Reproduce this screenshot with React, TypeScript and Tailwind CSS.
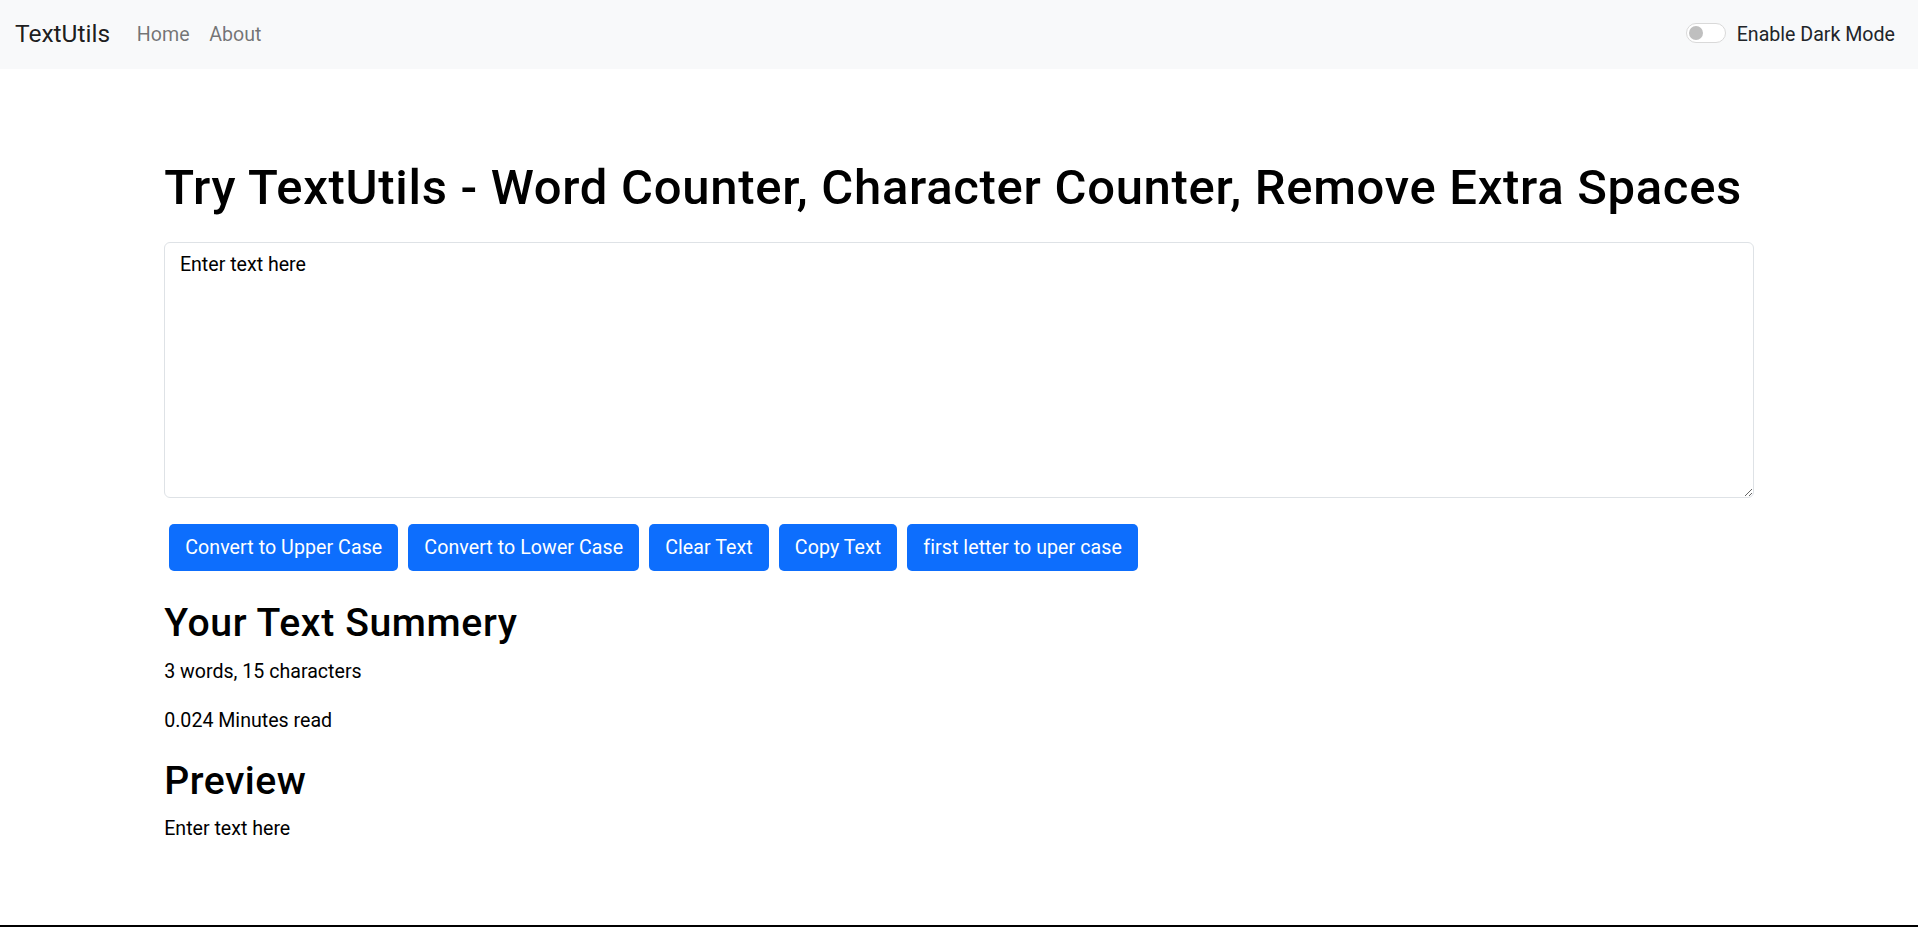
import { useState } from "react";

const buttons = [
  "Convert to Upper Case",
  "Convert to Lower Case",
  "Clear Text",
  "Copy Text",
  "first letter to uper case",
];

export default function App() {
  const [text, setText] = useState("Enter text here");
  const words = text.split(/\s+/).filter((w) => w.length > 0).length;

  return (
    <div className="min-h-[927px] flex flex-col bg-white text-black font-['Roboto','Segoe_UI','Noto_Sans',sans-serif]">
      {/* Navbar */}
      <nav className="h-[69px] bg-[#f8f9fa] flex items-center px-[15px]">
        <a href="#" className="text-[24.5px] leading-[1.5] text-black/90 mr-[17px]">
          TextUtils
        </a>
        <ul className="flex items-center">
          <li>
            <a href="#" className="block px-[9.8px] text-[19.6px] leading-[1.5] text-black/55">
              Home
            </a>
          </li>
          <li>
            <a href="#" className="block px-[9.8px] text-[19.6px] leading-[1.5] text-black/55">
              About
            </a>
          </li>
        </ul>
        <div className="ml-auto flex items-center gap-[11px] pr-[8px]">
          <span className="relative w-[40px] h-[20px] rounded-full border border-[#d9d9d9] bg-white -mt-[3px]">
            <span className="absolute left-[2px] top-[2px] w-[14px] h-[14px] rounded-full bg-[#bfbfbf]" />
          </span>
          <label className="text-[19.6px] leading-[1.5] text-[#212529]">Enable Dark Mode</label>
        </div>
      </nav>

      {/* Main */}
      <main className="w-full max-w-[1619px] mx-auto px-[14.7px] pt-[90px]">
        <h1 className="text-[49px] leading-[1.2] font-medium tracking-[0.7px] mb-[24px]">
          Try TextUtils - Word Counter, Character Counter, Remove Extra Spaces
        </h1>
        <textarea
          value={text}
          onChange={(e) => setText(e.target.value)}
          className="block w-full h-[256px] border border-[#dee2e6] rounded-[6px] px-[14.7px] py-[7.4px] text-[19.6px] leading-[1.5] text-black outline-none"
        />
        <div className="flex gap-[10px] ml-[5px] mt-[26px]">
          {buttons.map((b) => (
            <button
              key={b}
              className="h-[47px] px-[16px] rounded-[5px] bg-[#0d6efd] text-white text-[19.6px] leading-[1.5] tracking-[0.07px]"
            >
              {b}
            </button>
          ))}
        </div>

        <h2 className="text-[39.2px] leading-[1.2] font-medium tracking-[0.6px] mt-[29px] mb-[10px]">
          Your Text Summery
        </h2>
        <p className="text-[19.6px] leading-[1.5] mb-[20px]">
          {words} words, {text.length} characters
        </p>
        <p className="text-[19.6px] leading-[1.5]">{(0.008 * words).toFixed(3)} Minutes read</p>

        <h2 className="text-[39.2px] leading-[1.2] font-medium tracking-[0.5px] mt-[22px] mb-[9px]">
          Preview
        </h2>
        <p className="text-[19.6px] leading-[1.5]">{text}</p>
      </main>

      <div className="mt-auto h-[2px] bg-black" />
    </div>
  );
}
